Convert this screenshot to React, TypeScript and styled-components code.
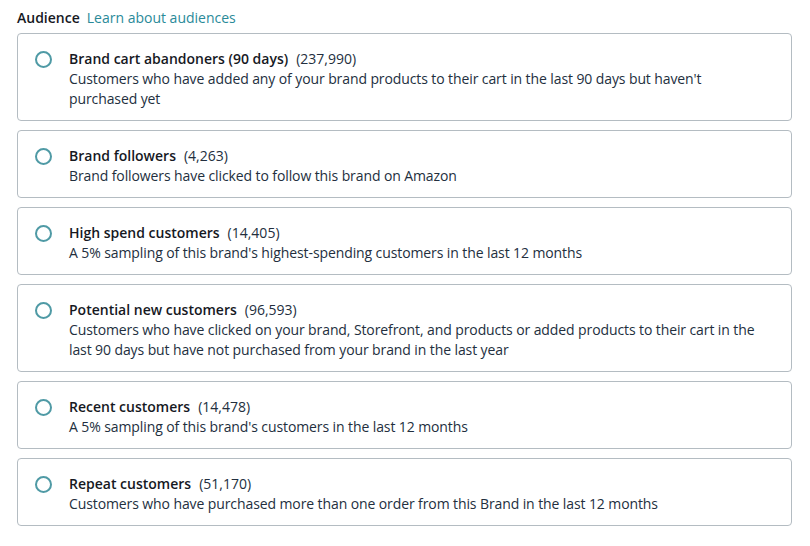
import React from "react";
import styled, { createGlobalStyle } from "styled-components";

const GlobalStyle = createGlobalStyle`
  html, body {
    margin: 0;
    padding: 0;
    background: #ffffff;
  }
  body {
    font-family: "Open Sans", "Noto Sans", Arial, sans-serif;
    color: #16191f;
  }
`;

const audiences = [
  {
    name: "Brand cart abandoners (90 days)",
    count: "237,990",
    text: "Customers who have added any of your brand products to their cart in the last 90 days but haven't purchased yet",
  },
  {
    name: "Brand followers",
    count: "4,263",
    text: "Brand followers have clicked to follow this brand on Amazon",
  },
  {
    name: "High spend customers",
    count: "14,405",
    text: "A 5% sampling of this brand's highest-spending customers in the last 12 months",
  },
  {
    name: "Potential new customers",
    count: "96,593",
    text: "Customers who have clicked on your brand, Storefront, and products or added products to their cart in the last 90 days but have not purchased from your brand in the last year",
  },
  {
    name: "Recent customers",
    count: "14,478",
    text: "A 5% sampling of this brand's customers in the last 12 months",
  },
  {
    name: "Repeat customers",
    count: "51,170",
    text: "Customers who have purchased more than one order from this Brand in the last 12 months",
  },
];

const App = () => {
  const [picked, setPicked] = React.useState<number | null>(null);

  return (
    <>
      <GlobalStyle />
      <Page>
        <Header>
          <Label>Audience</Label>
          <Link href="#">Learn about audiences</Link>
        </Header>
        <List>
          {audiences.map((a, i) => (
            <Card key={a.name} onClick={() => setPicked(i)}>
              <Radio checked={picked === i} />
              <Body>
                <Title>
                  <b>{a.name}</b>
                  <Count>({a.count})</Count>
                </Title>
                <Desc>{a.text}</Desc>
              </Body>
            </Card>
          ))}
        </List>
      </Page>
    </>
  );
};

export default App;

const Page = styled.div`
  padding: 9px 18px 0 17px;
  width: 775px;
`;

const Header = styled.div`
  display: flex;
  align-items: baseline;
  gap: 7px;
  height: 18px;
  line-height: 18px;
  font-size: 14px;
  margin-bottom: 6px;
`;

const Label = styled.span`
  font-weight: 600;
  color: #16191f;
`;

const Link = styled.a`
  color: #2a8a99;
  text-decoration: none;
`;

const List = styled.div`
  display: flex;
  flex-direction: column;
  gap: 9px;
`;

const Card = styled.div`
  display: flex;
  align-items: flex-start;
  border: 1px solid #b4bcc2;
  border-radius: 4px;
  padding: 15px 20px 11px 17px;
  cursor: pointer;
`;

const Radio = styled.span<{ checked: boolean }>`
  flex: none;
  box-sizing: border-box;
  width: 17px;
  height: 17px;
  margin-top: 2px;
  margin-right: 17px;
  border-radius: 50%;
  border: ${(p) => (p.checked ? "5px solid #0f7f8f" : "2px solid #4f9aa5")};
`;

const Body = styled.div`
  flex: 1;
  font-size: 14px;
  line-height: 20px;
`;

const Title = styled.div`
  color: #16191f;
  b {
    font-weight: 600;
  }
`;

const Count = styled.span`
  margin-left: 8px;
  color: #232f3e;
`;

const Desc = styled.div`
  color: #232f3e;
  letter-spacing: -0.1px;
`;
